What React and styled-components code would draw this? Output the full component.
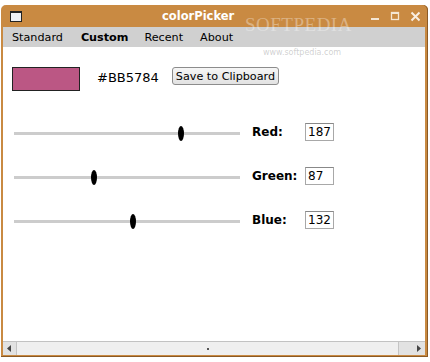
import React from 'react';
import styled, { createGlobalStyle } from 'styled-components';

const Global = createGlobalStyle`
  html, body { margin: 0; padding: 0; background: #fff; }
  body { font-family: "DejaVu Sans", Verdana, sans-serif; font-size: 13px; color: #000; }
`;

const Window = styled.div`
  position: relative;
  margin: 5px 0 0 1px;
  width: 427px;
  height: 352px;
  box-sizing: border-box;
  background: #c98a42;
  border-radius: 5px 5px 0 0;
  padding: 0 3px 2px 2px;
  display: flex;
  flex-direction: column;
  box-shadow: inset 0 -1px 0 #8a5a26, inset -1px 0 0 #8a5a26;
`;

const TitleBar = styled.div`
  height: 22px;
  display: flex;
  align-items: center;
  position: relative;
  color: #fff;
`;

const WinIcon = styled.div`
  width: 10px;
  height: 8px;
  margin-left: 7px;
  border: 1px solid #222;
  border-top-width: 2px;
  background: #eef0f4;
`;

const Title = styled.div`
  position: absolute;
  left: 159px;
  top: 4px;
  font-weight: bold;
  font-size: 11.5px;
  letter-spacing: 0;
`;

const Controls = styled.div`
  margin-left: auto;
  display: flex;
  align-items: center;
  gap: 10px;
  margin-right: 4px;
`;

const Watermark = styled.div`
  position: absolute;
  left: 244px;
  top: 9px;
  font-family: "Liberation Serif", serif;
  font-size: 19px;
  letter-spacing: 0.5px;
  color: rgba(255, 255, 255, 0.35);
  pointer-events: none;
`;

const WatermarkUrl = styled.div`
  position: absolute;
  left: 262px;
  top: 43px;
  font-size: 8px;
  color: rgba(150, 150, 150, 0.45);
  pointer-events: none;
`;

const MenuBar = styled.div`
  height: 20px;
  background: #d0d0d0;
  display: flex;
  align-items: center;
  padding-left: 9px;
  font-size: 11.2px;
`;

const MenuItem = styled.div`
  font-weight: ${p => (p.$active ? 'bold' : 'normal')};
  margin-right: ${p => p.$gap}px;
  padding-top: 1px;
`;

const Content = styled.div`
  flex: 1;
  background: #fff;
  padding: 20px 0 0 9px;
`;

const TopRow = styled.div`
  display: flex;
  align-items: center;
`;

const Swatch = styled.div`
  width: 66px;
  height: 22px;
  background: ${p => p.$color};
  border: 1px solid #222;
`;

const Hex = styled.div`
  margin-left: 17px;
  margin-top: -4px;
`;

const Button = styled.button`
  margin-left: 13px;
  margin-top: -6px;
  font-family: inherit;
  font-size: 11.2px;
  height: 18px;
  padding: 0 3px;
  background: linear-gradient(#f6f6f6, #e2e2e2);
  border: 1px solid #8c8c8c;
  border-radius: 3px;
  color: #000;
`;

const Sliders = styled.div`
  display: flex;
  flex-direction: column;
  gap: 26px;
  margin-top: 31px;
`;

const Row = styled.div`
  display: flex;
  align-items: center;
  height: 18px;
`;

const Track = styled.div`
  position: relative;
  width: 226px;
  height: 3px;
  margin-left: 2px;
  margin-top: 5px;
  background: #cccccc;
`;

const Thumb = styled.div`
  position: absolute;
  top: -6px;
  width: 6px;
  height: 15px;
  margin-left: -3px;
  border-radius: 50%;
  background: #000;
`;

const Label = styled.div`
  font-weight: bold;
  font-size: 12px;
  width: 53px;
  margin-left: 12px;
  margin-top: 2px;
`;

const Field = styled.div`
  width: 25px;
  height: 16px;
  margin-top: 2px;
  border: 1px solid #a8a8a8;
  border-top-color: #888;
  padding-left: 2px;
  line-height: 16px;
  font-size: 12px;
`;

const ScrollBar = styled.div`
  height: 13px;
  display: flex;
  background: #ececec;
  border-top: 1px solid #c2c2c2;
`;

const ScrollBtn = styled.div`
  width: ${p => p.$w}px;
  display: flex;
  align-items: center;
  justify-content: ${p => p.$align};
  padding: 0 4px;
  box-sizing: border-box;
  background: #e2e2e2;
  border-${p => (p.$side === 'left' ? 'right' : 'left')}: 1px solid #c4c4c4;
`;

const ScrollTrack = styled.div`
  flex: 1;
  display: flex;
  align-items: center;
  justify-content: center;
  background: #efefef;
`;

const Dot = styled.div`
  width: 2px;
  height: 2px;
  background: #555;
`;

const Arrow = ({ dir }) => (
  <svg width="4" height="7" viewBox="0 0 4 7">
    {dir === 'left' ? <path d="M4 0 L0 3.5 L4 7 Z" fill="#444" /> : <path d="M0 0 L4 3.5 L0 7 Z" fill="#444" />}
  </svg>
);

const channels = [
  { name: 'Red:', value: 187, pos: 167 },
  { name: 'Green:', value: 87, pos: 80 },
  { name: 'Blue:', value: 132, pos: 119 },
];

export default function App() {
  return (
    <>
      <Global />
      <Window>
        <TitleBar>
          <WinIcon />
          <Title>colorPicker</Title>
          <Controls>
            <svg width="10" height="10" viewBox="0 0 10 10"><rect x="1" y="7" width="8" height="2" fill="#f4e6d4" /></svg>
            <svg width="10" height="10" viewBox="0 0 10 10"><rect x="1.5" y="1.5" width="7" height="7" fill="none" stroke="#f4e6d4" strokeWidth="1.3" /><rect x="1" y="1" width="8" height="2" fill="#f4e6d4" /></svg>
            <svg width="11" height="11" viewBox="0 0 11 11"><path d="M1.5 1.5 L9.5 9.5 M9.5 1.5 L1.5 9.5" stroke="#f8eee2" strokeWidth="2" /></svg>
          </Controls>
        </TitleBar>
        <MenuBar>
          <MenuItem $gap={18}>Standard</MenuItem>
          <MenuItem $gap={16} $active>Custom</MenuItem>
          <MenuItem $gap={17}>Recent</MenuItem>
          <MenuItem $gap={0}>About</MenuItem>
        </MenuBar>
        <Content>
          <TopRow>
            <Swatch $color="#BB5784" />
            <Hex>#BB5784</Hex>
            <Button>Save to Clipboard</Button>
          </TopRow>
          <Sliders>
            {channels.map(c => (
              <Row key={c.name}>
                <Track>
                  <Thumb style={{ left: c.pos }} />
                </Track>
                <Label>{c.name}</Label>
                <Field>{c.value}</Field>
              </Row>
            ))}
          </Sliders>
        </Content>
        <ScrollBar>
          <ScrollBtn $w={14} $align="flex-start" $side="left"><Arrow dir="left" /></ScrollBtn>
          <ScrollTrack><Dot /></ScrollTrack>
          <ScrollBtn $w={27} $align="flex-end" $side="right"><Arrow dir="right" /></ScrollBtn>
        </ScrollBar>
        <Watermark>SOFTPEDIA</Watermark>
        <WatermarkUrl>www.softpedia.com</WatermarkUrl>
      </Window>
    </>
  );
}
